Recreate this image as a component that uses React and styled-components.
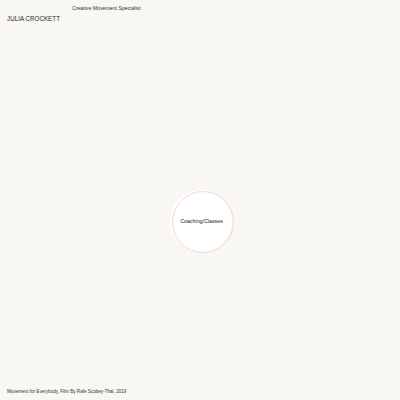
import styled, { createGlobalStyle } from "styled-components";

const Global = createGlobalStyle`
  html, body {
    margin: 0;
    padding: 0;
    background: #f9f7f3;
  }
  body {
    font-family: "Liberation Sans", Arial, sans-serif;
    color: #222;
  }
`;

const Page = styled.div`
  width: 400px;
  height: 400px;
  display: flex;
  flex-direction: column;
  background: #f9f7f3;
`;

const Header = styled.header`
  display: flex;
  align-items: flex-start;
  padding: 5px 7px 0 7px;
  height: 40px;
  box-sizing: border-box;
`;

const Name = styled.h1`
  margin: 9px 0 0 0;
  font-size: 6.2px;
  font-weight: 400;
  letter-spacing: 0.05px;
  color: #1c1c28;
  width: 65px;
  white-space: nowrap;
  transform: scaleY(1.1);
  transform-origin: left top;
`;

const Tagline = styled.span`
  font-size: 5.2px;
  color: #333;
  white-space: nowrap;
`;

const Main = styled.main`
  flex: 1;
  display: flex;
  align-items: center;
  justify-content: center;
  padding: 12px 0 0 2px;
`;

const Bubble = styled.div`
  position: relative;
  width: 62px;
  height: 62px;
  border-radius: 50%;
  background: #fff;
  display: flex;
  align-items: center;
  justify-content: center;
  &::after {
    content: "";
    position: absolute;
    left: 2px;
    top: 1px;
    width: 62px;
    height: 62px;
    border-radius: 50%;
    border: 1px solid #f4d6ce;
    box-sizing: border-box;
  }
`;

const BubbleText = styled.span`
  font-size: 5.3px;
  color: #222;
  margin-left: 1px;
`;

const Footer = styled.footer`
  padding: 0 7px 6px 7px;
  font-size: 4.6px;
  color: #333;
`;

export default function App() {
  return (
    <Page>
      <Global />
      <Header>
        <Name>JULIA CROCKETT</Name>
        <Tagline>Creative Movement Specialist</Tagline>
      </Header>
      <Main>
        <Bubble>
          <BubbleText>Coaching/Classes</BubbleText>
        </Bubble>
      </Main>
      <Footer>Movement for Everybody, Film By Rafe Scobey-Thal, 2019</Footer>
    </Page>
  );
}
